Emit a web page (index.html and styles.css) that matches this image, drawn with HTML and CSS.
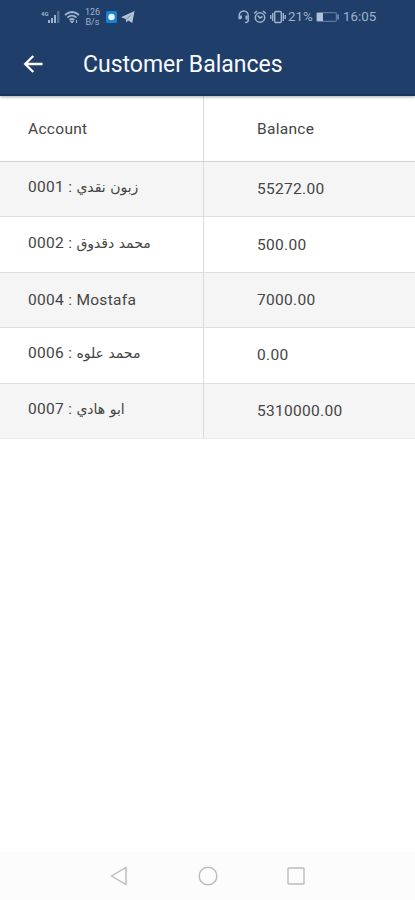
FILE: index.html
```html
<!DOCTYPE html>
<html lang="en">
<head>
    <meta charset="UTF-8">
    <meta name="viewport" content="width=device-width, initial-scale=1.0">
    <title>Customer Balances</title>
    <link rel="stylesheet" href="styles.css">
</head>
<body>
    <header class="top">
        <div class="status-bar">
            <div class="status-left">
                <svg class="signal" width="20" height="14" viewBox="0 0 20 14">
                    <text x="0" y="6" class="net">4G</text>
                    <path d="M7 13v-3h2v3zM10 13V8h2v5zM13 13V5h2v8z" fill="#a0b3cd"/>
                    <path d="M16 13V1h2.500v12z" fill="#4d6b94"/>
                </svg>
                <svg class="wifi" width="16" height="14" viewBox="0 0 16 14" fill="none" stroke="#a0b3cd" stroke-width="1.700">
                    <path d="M1 5Q8-1 15 5M3.300 7.600Q8 3.500 12.500 7.600M5.500 10Q8 8 10.300 10"/>
                    <path d="M6.500 11.300L8 13l1.500-1.700zM12.500 10v3" fill="#a0b3cd" stroke-width="1"/>
                </svg>
                <div class="speed"><span>126</span><span>B/s</span></div>
                <svg class="app-dot" width="11" height="12" viewBox="0 0 11 12">
                    <rect width="11" height="12" rx="1.500" fill="#1682d5"/>
                    <circle cx="5.500" cy="6" r="3.200" fill="#eef8ff"/>
                </svg>
                <svg class="plane" width="14" height="12" viewBox="0 0 14 12">
                    <path d="M0 6.300L13.500 0 11.300 12 7.200 9.500 5.300 11.500 4.800 8z" fill="#b4c2d6"/>
                    <path d="M5.500 8l4-3.500" fill="none" stroke="#3d5a84" stroke-width=".6"/>
                </svg>
            </div>
            <div class="status-right">
                <svg width="12" height="14" viewBox="0 0 12 14" fill="none" stroke="#a0b3cd" stroke-width="1.500">
                    <path d="M3 8.500H1.200V5.500a4.500 4.500 0 0 1 9 0v5q0 2-3.200 2"/>
                    <path d="M3 5.500v3M8.500 5.500v4" stroke-width="2"/>
                </svg>
                <svg class="alarm" width="14" height="14" viewBox="0 0 14 14" fill="none" stroke="#a0b3cd" stroke-width="1.500">
                    <circle cx="7" cy="7.500" r="4.700"/>
                    <path d="M1 3.500L4 1M13 3.500L10 1M4.500 5.500L7 8l2.500-1.500"/>
                </svg>
                <svg class="vibrate" width="16" height="14" viewBox="0 0 16 14" fill="none" stroke="#a0b3cd" stroke-width="1.400">
                    <rect x="4.700" y="1.500" width="6.600" height="11" rx="1"/>
                    <path d="M2.700 3v8M.8 5v4M13.300 3v8M15.200 5v4"/>
                </svg>
                <span class="percent">21%</span>
                <svg class="battery" width="24" height="10" viewBox="0 0 24 10">
                    <rect x=".6" y=".6" width="19.800" height="8.800" rx="1.500" fill="none" stroke="#5d789e" stroke-width="1.200"/>
                    <rect x="1" y="1" width="6" height="8" fill="#b3c1d5"/>
                    <path d="M22 2.500v5" stroke="#8399b8" stroke-width="1.500"/>
                </svg>
                <span class="clock">16:05</span>
            </div>
        </div>
        <div class="app-bar">
            <svg class="back" width="20" height="18" viewBox="0 0 20 18" fill="none" stroke="#fff" stroke-width="2.300">
                <path d="M19.500 9H2M10.300 1L2.200 9l8.100 8"/>
            </svg>
            <h1>Customer Balances</h1>
        </div>
    </header>

    <main>
        <div class="balances">
            <div class="row head">
                <div class="cell">Account</div>
                <div class="cell">Balance</div>
            </div>
            <div class="row shaded">
                <div class="cell raised">0001 : <span class="arabic">زبون نقدي</span></div>
                <div class="cell">55272.00</div>
            </div>
            <div class="row">
                <div class="cell raised">0002 : <span class="arabic">محمد دقدوق</span></div>
                <div class="cell">500.00</div>
            </div>
            <div class="row shaded">
                <div class="cell">0004 : Mostafa</div>
                <div class="cell">7000.00</div>
            </div>
            <div class="row">
                <div class="cell raised">0006 : <span class="arabic">محمد علوه</span></div>
                <div class="cell">0.00</div>
            </div>
            <div class="row shaded">
                <div class="cell raised">0007 : <span class="arabic">ابو هادي</span></div>
                <div class="cell">5310000.00</div>
            </div>
        </div>
    </main>

    <nav class="nav-bar">
        <svg width="18" height="20" viewBox="0 0 18 20"><path d="M1.500 10L16 1.500v17z"/></svg>
        <svg width="20" height="20" viewBox="0 0 20 20"><circle cx="10" cy="10" r="8.800"/></svg>
        <svg width="18" height="18" viewBox="0 0 18 18"><rect x="1" y="1" width="16" height="16" rx=".5"/></svg>
    </nav>
</body>
</html>
```

FILE: styles.css
```css
* { box-sizing: border-box; }
body {
    margin: 0;
    height: 900px;
    display: flex;
    flex-direction: column;
    background: #fff;
    font-family: Roboto, "DejaVu Sans", sans-serif;
    color: #444;
    overflow: hidden;
}
svg {
    display: block;
    flex: none;
}
.top {
    height: 96px;
    flex: none;
    background: #1f3e69;
    border-bottom: 2px solid #12365f;
    box-shadow: 0 1px 3px rgba(0,0,0,0.35);
    z-index: 1;
}
.status-bar {
    display: flex;
    justify-content: space-between;
    height: 32px;
    padding: 0 39px 0 41px;
    color: #a0b3cd;
}
.status-left, .status-right {
    display: flex;
    align-items: center;
    height: 33px;
}
.net {
    font-size: 6px;
    font-weight: bold;
    fill: #a0b3cd;
}
.wifi { margin-left: 3px; }
.speed {
    display: flex;
    flex-direction: column;
    width: 15px;
    margin-left: 5px;
    font-size: 9px;
    line-height: 10px;
    text-align: center;
}
.app-dot { margin-left: 6px; }
.plane { margin-left: 4px; }
.alarm { margin-left: 3px; }
.vibrate { margin-left: 3px; }
.percent {
    margin-left: 2px;
    width: 25px;
    font-size: 13.3px;
}
.battery { margin-left: 3px; }
.clock {
    width: 33px;
    margin-left: 3px;
    font-size: 13.3px;
    white-space: nowrap;
}
.app-bar {
    display: flex;
    align-items: center;
    height: 64px;
    padding-left: 23px;
}
.app-bar h1 {
    margin: 1px 0 0 40px;
    color: #f8faff;
    font-size: 23px;
    font-weight: 400;
    line-height: 28px;
}
main { flex: 1; }
.row {
    display: grid;
    grid-template-columns: 204px 1fr;
    height: 55.4px;
    border-bottom: 1px solid #dedede;
}
.row.head {
    height: 66px;
    border-color: #d4d4d4;
}
.row:last-child { border-color: #ececec; }
.shaded { background: #f5f5f5; }
.cell {
    display: flex;
    align-items: center;
    padding-left: 28px;
    font-size: 15.5px;
    letter-spacing: 0.3px;
    white-space: pre;
}
.cell:first-child { border-right: 1px solid #dadada; }
.cell:last-child { padding-left: 53px; }
.raised { padding-bottom: 4px; }
.arabic {
    font-family: "DejaVu Sans", sans-serif;
    font-size: 14px;
    letter-spacing: 0;
}
.nav-bar {
    display: flex;
    align-items: center;
    justify-content: space-between;
    height: 48px;
    padding: 0 110px 0 110px;
    background: #fcfcfc;
}
.nav-bar svg {
    fill: none;
    stroke: #bbb;
    stroke-width: 1.4;
}
```
